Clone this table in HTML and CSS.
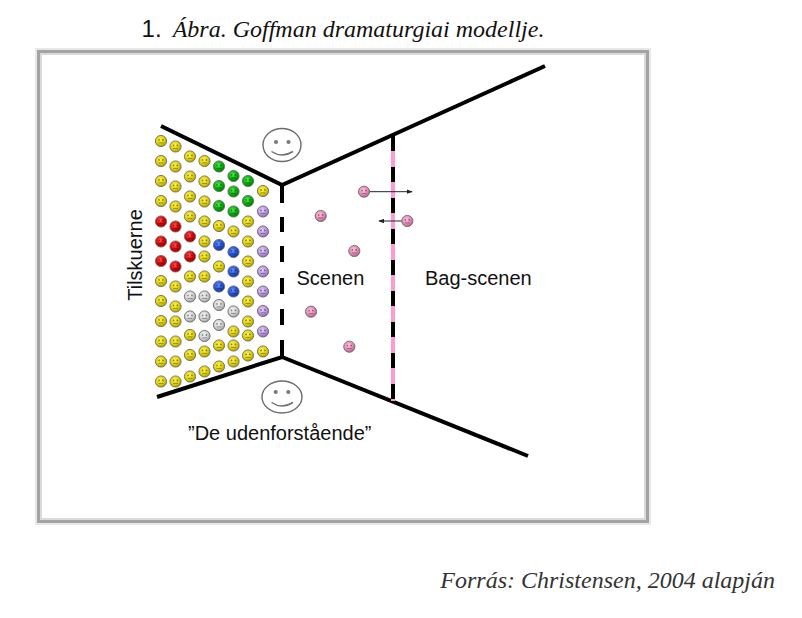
FILE: index.html
```html
<!DOCTYPE html>
<html lang="hu">
<head>
<meta charset="utf-8">
<title>Goffman dramaturgiai modellje</title>
<link rel="stylesheet" href="styles.css">
</head>
<body>
<div class="page">
  <h1 class="title"><span class="num">1.</span><span class="cap">Ábra. Goffman dramaturgiai modellje.</span></h1>
  <div class="frame">
    <svg class="diagram" width="612" height="473" viewBox="37 50 612 473" xmlns="http://www.w3.org/2000/svg">
      <defs>
        <radialGradient id="gY" cx="42%" cy="38%" r="62%"><stop offset="0" stop-color="#fbf460"/><stop offset="0.6" stop-color="#e2d400"/><stop offset="1" stop-color="#a99b00"/></radialGradient>
        <radialGradient id="gR" cx="42%" cy="38%" r="62%"><stop offset="0" stop-color="#ff5a5a"/><stop offset="0.6" stop-color="#dc0000"/><stop offset="1" stop-color="#960000"/></radialGradient>
        <radialGradient id="gG" cx="42%" cy="38%" r="62%"><stop offset="0" stop-color="#5ee85e"/><stop offset="0.6" stop-color="#00b300"/><stop offset="1" stop-color="#007500"/></radialGradient>
        <radialGradient id="gB" cx="42%" cy="38%" r="62%"><stop offset="0" stop-color="#6a98ff"/><stop offset="0.6" stop-color="#2152d8"/><stop offset="1" stop-color="#12308a"/></radialGradient>
        <radialGradient id="gW" cx="42%" cy="38%" r="62%"><stop offset="0" stop-color="#f6f6f6"/><stop offset="0.6" stop-color="#d2d2d2"/><stop offset="1" stop-color="#9a9a9a"/></radialGradient>
        <radialGradient id="gP" cx="42%" cy="38%" r="62%"><stop offset="0" stop-color="#e6d4f8"/><stop offset="0.6" stop-color="#b996e0"/><stop offset="1" stop-color="#8866b0"/></radialGradient>
        <radialGradient id="gK" cx="42%" cy="38%" r="62%"><stop offset="0" stop-color="#ffc6e0"/><stop offset="0.6" stop-color="#e68cb8"/><stop offset="1" stop-color="#b05e88"/></radialGradient>
        <g id="face">
          <circle cx="-1.9" cy="-1.1" r="0.85" fill="#000" fill-opacity="0.45"/>
          <circle cx="1.9" cy="-1.1" r="0.85" fill="#000" fill-opacity="0.45"/>
          <line x1="-2.4" y1="1.9" x2="2.4" y2="1.9" stroke="#000" stroke-opacity="0.45" stroke-width="0.8"/>
        </g>
        <g id="Y"><circle r="5.6" fill="url(#gY)" stroke="#6e6e6e" stroke-width="0.9"/><use href="#face"/></g>
        <g id="R"><circle r="5.6" fill="url(#gR)" stroke="#6e6e6e" stroke-width="0.9"/><use href="#face"/></g>
        <g id="G"><circle r="5.6" fill="url(#gG)" stroke="#6e6e6e" stroke-width="0.9"/><use href="#face"/></g>
        <g id="B"><circle r="5.6" fill="url(#gB)" stroke="#6e6e6e" stroke-width="0.9"/><use href="#face"/></g>
        <g id="W"><circle r="5.6" fill="url(#gW)" stroke="#6e6e6e" stroke-width="0.9"/><use href="#face"/></g>
        <g id="P"><circle r="5.6" fill="url(#gP)" stroke="#6e6e6e" stroke-width="0.9"/><use href="#face"/></g>
        <g id="K"><circle r="5.6" fill="url(#gK)" stroke="#6e6e6e" stroke-width="0.9"/><use href="#face"/></g>
        <marker id="ah" viewBox="0 0 8 6" refX="7" refY="3" markerWidth="6" markerHeight="5" orient="auto" markerUnits="userSpaceOnUse">
          <path d="M0,0 L8,3 L0,6 Z" fill="#222"/>
        </marker>
      </defs>

      <!-- stage lines -->
      <polyline points="161,126 282,185 545,66" fill="none" stroke="#000" stroke-width="4" stroke-linejoin="miter"/>
      <polyline points="157,397 282,357 528,456" fill="none" stroke="#000" stroke-width="4" stroke-linejoin="miter"/>
      <g stroke="#000" stroke-width="4">
        <line x1="282" y1="185" x2="282" y2="203"/>
        <line x1="282" y1="217" x2="282" y2="232"/>
        <line x1="282" y1="246" x2="282" y2="262"/>
        <line x1="282" y1="278" x2="282" y2="294"/>
        <line x1="282" y1="309" x2="282" y2="325"/>
        <line x1="282" y1="340" x2="282" y2="357"/>
      </g>
      <line x1="393" y1="136" x2="393" y2="401" stroke="#ff9ccf" stroke-width="4"/>
      <line x1="393" y1="136" x2="393" y2="401" stroke="#000" stroke-width="4" stroke-dasharray="15 16"/>

      <!-- outsiders -->
      <g fill="#fff" stroke="#6c6c6c" stroke-width="1.4">
        <ellipse cx="282" cy="145" rx="19" ry="16.5"/>
        <ellipse cx="282" cy="397" rx="20" ry="16"/>
      </g>
      <g fill="#7a7a7a">
        <circle cx="276" cy="142" r="2.1"/><circle cx="288.5" cy="142" r="2.1"/>
        <circle cx="275.7" cy="392" r="2.1"/><circle cx="288.3" cy="392" r="2.1"/>
      </g>
      <g fill="none" stroke="#6c6c6c" stroke-width="1.5">
        <path d="M271.5,151.5 Q282,158.5 293,151.5"/>
        <path d="M271.5,402.5 Q282,409.5 293,402.5"/>
      </g>

      <!-- audience -->
      <use href="#Y" x="161" y="141"/><use href="#Y" x="161" y="161"/><use href="#Y" x="161" y="181"/><use href="#Y" x="161" y="201"/>
      <use href="#R" x="161" y="221.5"/><use href="#R" x="161" y="241.5"/><use href="#R" x="161" y="261"/>
      <use href="#Y" x="161" y="281"/><use href="#Y" x="161" y="301"/><use href="#Y" x="161" y="321"/><use href="#Y" x="161" y="341.5"/><use href="#Y" x="161" y="361.5"/><use href="#Y" x="161" y="381.5"/>

      <use href="#Y" x="175.5" y="146.5"/><use href="#Y" x="175.5" y="166.5"/><use href="#Y" x="175.5" y="186.5"/><use href="#Y" x="175.5" y="206.5"/>
      <use href="#R" x="175.5" y="226.5"/><use href="#R" x="175.5" y="246.5"/><use href="#R" x="175.5" y="266.5"/>
      <use href="#Y" x="175.5" y="286.5"/><use href="#Y" x="175.5" y="306.5"/><use href="#Y" x="175.5" y="321.5"/><use href="#Y" x="175.5" y="341.5"/><use href="#Y" x="175.5" y="361.5"/><use href="#Y" x="175.5" y="381.5"/>

      <use href="#Y" x="190" y="156.5"/><use href="#Y" x="190" y="176.5"/><use href="#Y" x="190" y="196.5"/><use href="#Y" x="190" y="216.5"/>
      <use href="#R" x="190" y="236.5"/><use href="#R" x="190" y="256.5"/><use href="#Y" x="190" y="276.5"/>
      <use href="#W" x="190" y="296.5"/><use href="#W" x="190" y="316.5"/>
      <use href="#Y" x="190" y="335"/><use href="#Y" x="190" y="355"/><use href="#Y" x="190" y="376.5"/>

      <use href="#Y" x="204.5" y="161"/><use href="#Y" x="204.5" y="181.5"/><use href="#Y" x="204.5" y="201.5"/><use href="#Y" x="204.5" y="221.5"/>
      <use href="#Y" x="204.5" y="241.5"/><use href="#Y" x="204.5" y="256.5"/><use href="#Y" x="204.5" y="276.5"/>
      <use href="#W" x="204.5" y="296.5"/><use href="#W" x="204.5" y="316.5"/><use href="#W" x="204.5" y="336"/>
      <use href="#Y" x="204.5" y="351.5"/><use href="#Y" x="204.5" y="371.5"/>

      <use href="#G" x="219" y="166.5"/><use href="#G" x="219" y="186"/><use href="#G" x="219" y="206"/>
      <use href="#Y" x="219" y="226"/><use href="#B" x="219" y="245"/><use href="#Y" x="219" y="266.5"/><use href="#B" x="219" y="286.5"/>
      <use href="#W" x="219" y="305"/><use href="#W" x="219" y="325"/>
      <use href="#Y" x="219" y="345.5"/><use href="#Y" x="219" y="366.5"/>

      <use href="#G" x="233.5" y="176"/><use href="#G" x="233.5" y="191.5"/><use href="#G" x="233.5" y="211.5"/>
      <use href="#Y" x="233.5" y="231.5"/><use href="#B" x="233.5" y="252"/><use href="#B" x="233.5" y="271.5"/><use href="#B" x="233.5" y="291.5"/>
      <use href="#W" x="233.5" y="311.5"/>
      <use href="#Y" x="233.5" y="331.5"/><use href="#Y" x="233.5" y="345.5"/><use href="#Y" x="233.5" y="361.5"/>

      <use href="#G" x="248" y="181"/><use href="#G" x="248" y="201"/>
      <use href="#Y" x="248" y="221.5"/><use href="#Y" x="248" y="241.5"/><use href="#Y" x="248" y="261.5"/><use href="#Y" x="248" y="281.5"/>
      <use href="#Y" x="248" y="301.5"/><use href="#Y" x="248" y="321.5"/><use href="#Y" x="248" y="335.5"/><use href="#Y" x="248" y="355.5"/>

      <use href="#Y" x="263" y="191"/>
      <use href="#P" x="263" y="211.5"/><use href="#P" x="263" y="231.5"/><use href="#P" x="263" y="251.5"/><use href="#P" x="263" y="271.5"/>
      <use href="#P" x="263" y="291.5"/><use href="#P" x="263" y="311"/><use href="#P" x="263" y="331.5"/>
      <use href="#Y" x="263" y="351.5"/>

      <!-- actors -->
      <g stroke="#222" stroke-width="1">
        <line x1="364" y1="191.7" x2="412" y2="191.7" marker-end="url(#ah)"/>
        <line x1="407" y1="221" x2="379" y2="221" marker-end="url(#ah)"/>
      </g>
      <use href="#K" x="364" y="191.7"/>
      <use href="#K" x="320.7" y="216"/>
      <use href="#K" x="407.3" y="221"/>
      <use href="#K" x="354.3" y="251"/>
      <use href="#K" x="311" y="311.7"/>
      <use href="#K" x="349.3" y="346.7"/>

      <!-- labels -->
      <g class="label">
        <text x="296.5" y="285">Scenen</text>
        <text x="425" y="285">Bag-scenen</text>
        <text x="188" y="440">&#8221;De udenforstående&#8221;</text>
        <text transform="translate(141.5,255) rotate(-90)" text-anchor="middle">Tilskuerne</text>
      </g>
    </svg>
  </div>
  <p class="source">Forrás: Christensen, 2004 alapján</p>
</div>
</body>
</html>
```

FILE: styles.css
```css
html, body {
  margin: 0;
  padding: 0;
  background: #ffffff;
}

.page {
  width: 802px;
  padding-top: 15px;
}

.title {
  margin: 0 0 0 35px;
  width: 616px;
  text-align: center;
  font-size: 24px;
  line-height: 28px;
  font-weight: normal;
  color: #111;
  white-space: nowrap;
}

.title .num {
  font-family: "Liberation Sans", Arial, sans-serif;
  font-style: normal;
  margin-right: 11px;
}

.title .cap {
  font-family: "Liberation Serif", "Times New Roman", serif;
  font-style: italic;
}

.frame {
  box-sizing: border-box;
  width: 616px;
  height: 477px;
  margin: 5px 0 0 35px;
  border: 2px solid #e8e8e8;
  box-shadow: inset 0 0 0 3px #a3a3a3, inset 0 0 0 5px #dadada;
  background: #ffffff;
}

.diagram {
  display: block;
}

.label text {
  font-family: "Liberation Sans", Arial, sans-serif;
  font-size: 20px;
  fill: #111;
}

.source {
  margin: 41px 0 0 0;
  padding-right: 27px;
  text-align: right;
  font-family: "Liberation Serif", "Times New Roman", serif;
  font-style: italic;
  font-size: 24px;
  line-height: 28px;
  color: #333;
}
```
